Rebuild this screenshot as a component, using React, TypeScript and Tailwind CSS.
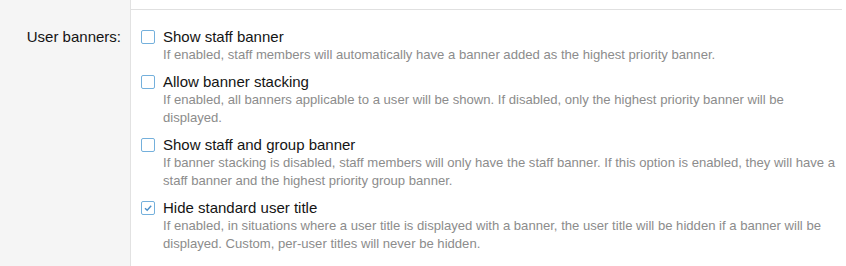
import React from "react";

const items = [
  {
    title: "Show staff banner",
    desc: "If enabled, staff members will automatically have a banner added as the highest priority banner.",
    checked: false,
  },
  {
    title: "Allow banner stacking",
    desc: "If enabled, all banners applicable to a user will be shown. If disabled, only the highest priority banner will be displayed.",
    checked: false,
  },
  {
    title: "Show staff and group banner",
    desc: "If banner stacking is disabled, staff members will only have the staff banner. If this option is enabled, they will have a staff banner and the highest priority group banner.",
    checked: false,
  },
  {
    title: "Hide standard user title",
    desc: "If enabled, in situations where a user title is displayed with a banner, the user title will be hidden if a banner will be displayed. Custom, per-user titles will never be hidden.",
    checked: true,
  },
];

function Box({ checked }: { checked: boolean }) {
  return (
    <div className="w-[14px] h-[14px] shrink-0 rounded-[2px] border border-[#74b0dc] bg-white flex items-center justify-center mt-[2px]">
      {checked && (
        <svg width="10" height="10" viewBox="0 0 10 10">
          <path d="M2 5.2 L4.2 7.3 L8.2 2.8" fill="none" stroke="#4a8fc9" strokeWidth="1.4" />
        </svg>
      )}
    </div>
  );
}

export default function App() {
  return (
    <div
      className="flex w-[846px] h-[266px] bg-white"
      style={{ fontFamily: '"Liberation Sans", Arial, sans-serif' }}
    >
      <div className="w-[131px] shrink-0 bg-[#f5f5f5] border-r border-[#e2e2e2] pt-[28px] pr-[9px] text-right text-[15px] leading-[18px] text-[#141414]">
        User banners:
      </div>
      <div className="flex-1 flex flex-col pt-[9px]">
        <div className="mr-[4px] border-t border-[#e0e0e0] pt-[18px] pl-[10px] pr-[6px] flex flex-col gap-[9px]">
          {items.map((it) => (
            <div key={it.title} className="flex gap-[8px]">
              <Box checked={it.checked} />
              <div className="flex flex-col">
                <div className="text-[15px] leading-[18px] text-[#141414]">{it.title}</div>
                <div className="text-[13.1px] leading-[18px] text-[#8c8c8c]">{it.desc}</div>
              </div>
            </div>
          ))}
        </div>
      </div>
    </div>
  );
}
